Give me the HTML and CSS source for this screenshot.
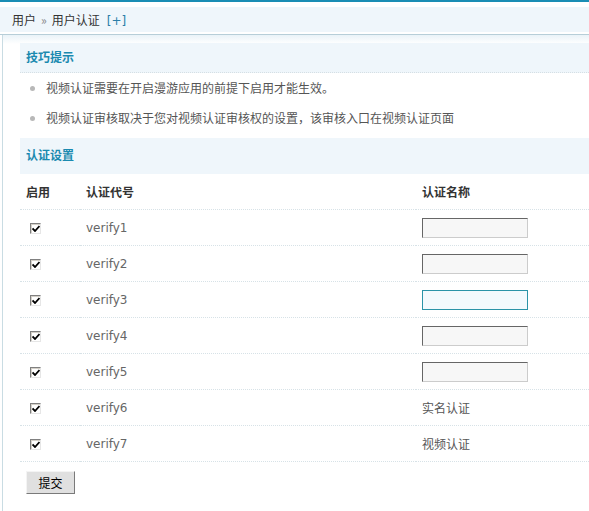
FILE: index.html
```html
<!DOCTYPE html>
<html lang="zh-CN">
<head>
    <meta charset="UTF-8">
    <title>用户认证</title>
    <link rel="stylesheet" href="styles.css">
</head>
<body>
    <div class="topbar">
        <div class="crumb">用户<span class="sep">&raquo;</span>用户认证<a class="add" href="#">[+]</a></div>
    </div>
    <div class="main">
        <h3 class="section">技巧提示</h3>
        <ul class="tips">
            <li>视频认证需要在开启漫游应用的前提下启用才能生效。</li>
            <li>视频认证审核取决于您对视频认证审核权的设置，该审核入口在视频认证页面</li>
        </ul>

        <h3 class="section tall">认证设置</h3>
        <form>
            <table class="grid">
                <tr class="head">
                    <th class="c1">启用</th>
                    <th class="c2">认证代号</th>
                    <th class="c3">认证名称</th>
                </tr>
                <tr>
                    <td><span class="chk"><svg viewBox="0 0 8 7" width="8" height="7"><path d="M0.5 3.5 L3 6 L7.5 1" fill="none" stroke="#000" stroke-width="1.8"/></svg></span></td>
                    <td class="code">verify1</td>
                    <td><input type="text" class="txt"></td>
                </tr>
                <tr>
                    <td><span class="chk"><svg viewBox="0 0 8 7" width="8" height="7"><path d="M0.5 3.5 L3 6 L7.5 1" fill="none" stroke="#000" stroke-width="1.8"/></svg></span></td>
                    <td class="code">verify2</td>
                    <td><input type="text" class="txt"></td>
                </tr>
                <tr>
                    <td><span class="chk"><svg viewBox="0 0 8 7" width="8" height="7"><path d="M0.5 3.5 L3 6 L7.5 1" fill="none" stroke="#000" stroke-width="1.8"/></svg></span></td>
                    <td class="code">verify3</td>
                    <td><input type="text" class="txt focus"></td>
                </tr>
                <tr>
                    <td><span class="chk"><svg viewBox="0 0 8 7" width="8" height="7"><path d="M0.5 3.5 L3 6 L7.5 1" fill="none" stroke="#000" stroke-width="1.8"/></svg></span></td>
                    <td class="code">verify4</td>
                    <td><input type="text" class="txt"></td>
                </tr>
                <tr>
                    <td><span class="chk"><svg viewBox="0 0 8 7" width="8" height="7"><path d="M0.5 3.5 L3 6 L7.5 1" fill="none" stroke="#000" stroke-width="1.8"/></svg></span></td>
                    <td class="code">verify5</td>
                    <td><input type="text" class="txt"></td>
                </tr>
                <tr>
                    <td><span class="chk"><svg viewBox="0 0 8 7" width="8" height="7"><path d="M0.5 3.5 L3 6 L7.5 1" fill="none" stroke="#000" stroke-width="1.8"/></svg></span></td>
                    <td class="code">verify6</td>
                    <td class="name">实名认证</td>
                </tr>
                <tr>
                    <td><span class="chk"><svg viewBox="0 0 8 7" width="8" height="7"><path d="M0.5 3.5 L3 6 L7.5 1" fill="none" stroke="#000" stroke-width="1.8"/></svg></span></td>
                    <td class="code">verify7</td>
                    <td class="name">视频认证</td>
                </tr>
            </table>
            <div class="actions">
                <button type="button" class="btn">提交</button>
            </div>
        </form>
    </div>
</body>
</html>
```

FILE: styles.css
```css
body {
    margin: 0;
    font-family: "DejaVu Sans", "Noto Sans CJK SC", sans-serif;
    font-size: 12px;
    color: #333;
    background: #fff;
}
.topbar {
    border-top: 2px solid #1a8db4;
    padding-top: 5px;
    border-bottom: 1px solid #b7ced8;
}
.crumb {
    height: 25px;
    line-height: 25px;
    padding-left: 12px;
    background: #eff6fb;
    border-bottom: 1px solid #fff;
    margin-bottom: 1px;
    color: #333;
    font-family: "Noto Sans CJK SC", sans-serif;
}
.crumb .sep {
    color: #888;
    font-size: 12px;
    margin: 0 5px 0 5px;
}
.crumb .add {
    color: #2c7ea8;
    text-decoration: none;
    margin-left: 7px;
    font-family: "DejaVu Sans", sans-serif;
}
.main {
    margin-left: 2px;
    border-left: 1px solid #c9dce3;
    padding: 8px 0 0 17px;
    background: linear-gradient(#eaf3f8, #fff 9px);
    min-height: 480px;
}
.section {
    margin: 0;
    height: 29px;
    line-height: 27px;
    padding-left: 6px;
    background: #eff6fb;
    color: #1b8ab0;
    font-size: 12px;
    font-weight: bold;
    font-family: "Noto Sans CJK SC", sans-serif;
    border-bottom: 1px dotted #d5dfe4;
}
.section.tall {
    height: 36px;
    line-height: 33px;
    border-bottom: none;
}
.tips {
    list-style: none;
    margin: 0 0 5px;
    padding: 0;
}
.tips li {
    height: 30px;
    line-height: 30px;
    padding-left: 26px;
    color: #555;
    position: relative;
    font-family: "Noto Sans CJK SC", sans-serif;
}
.tips li::before {
    content: "";
    position: absolute;
    left: 10px;
    top: 13px;
    width: 5px;
    height: 5px;
    border-radius: 50%;
    background: #b8b8b8;
}
form {
    margin: 0;
}
.grid {
    width: 100%;
    border-collapse: collapse;
}
.grid th,
.grid td {
    height: 35px;
    padding: 0 0 0 6px;
    border-bottom: 1px dotted #d7e2e7;
    text-align: left;
    vertical-align: middle;
    line-height: 16px;
}
.grid th {
    font-weight: bold;
    color: #333;
    font-family: "Noto Sans CJK SC", sans-serif;
}
.grid .c1 {
    width: 54px;
}
.grid .c2 {
    width: 330px;
}
.grid td.code {
    color: #666;
}
.grid td.name {
    color: #555;
    font-family: "Noto Sans CJK SC", sans-serif;
}
.chk {
    display: inline-flex;
    align-items: center;
    justify-content: center;
    vertical-align: middle;
    width: 9px;
    height: 9px;
    margin: 0 0 0 4px;
    border-top: 1px solid #808080;
    border-left: 1px solid #808080;
    border-right: 1px solid #e6e6e6;
    border-bottom: 1px solid #e6e6e6;
    background: #fff;
    box-shadow: inset 1px 1px 0 #d4d0c8;
}
.txt {
    box-sizing: border-box;
    width: 106px;
    height: 20px;
    margin: 0;
    padding: 0 3px;
    border-top: 1px solid #666;
    border-left: 1px solid #666;
    border-right: 1px solid #ccc;
    border-bottom: 1px solid #ccc;
    background: #f7f7f7;
    display: block;
}
.txt.focus {
    border: 1px solid #2b93a8;
    background: #f3f9fd;
}
.actions {
    padding: 9px 0 0 6px;
}
.btn {
    width: 49px;
    height: 23px;
    padding: 0;
    background: #e0e0e0;
    border-top: 1px solid #f4f4f4;
    border-left: 1px solid #f4f4f4;
    border-right: 1px solid #7a7a7a;
    border-bottom: 1px solid #7a7a7a;
    font-size: 12px;
    color: #000;
    font-family: "Noto Sans CJK SC", sans-serif;
}
```
